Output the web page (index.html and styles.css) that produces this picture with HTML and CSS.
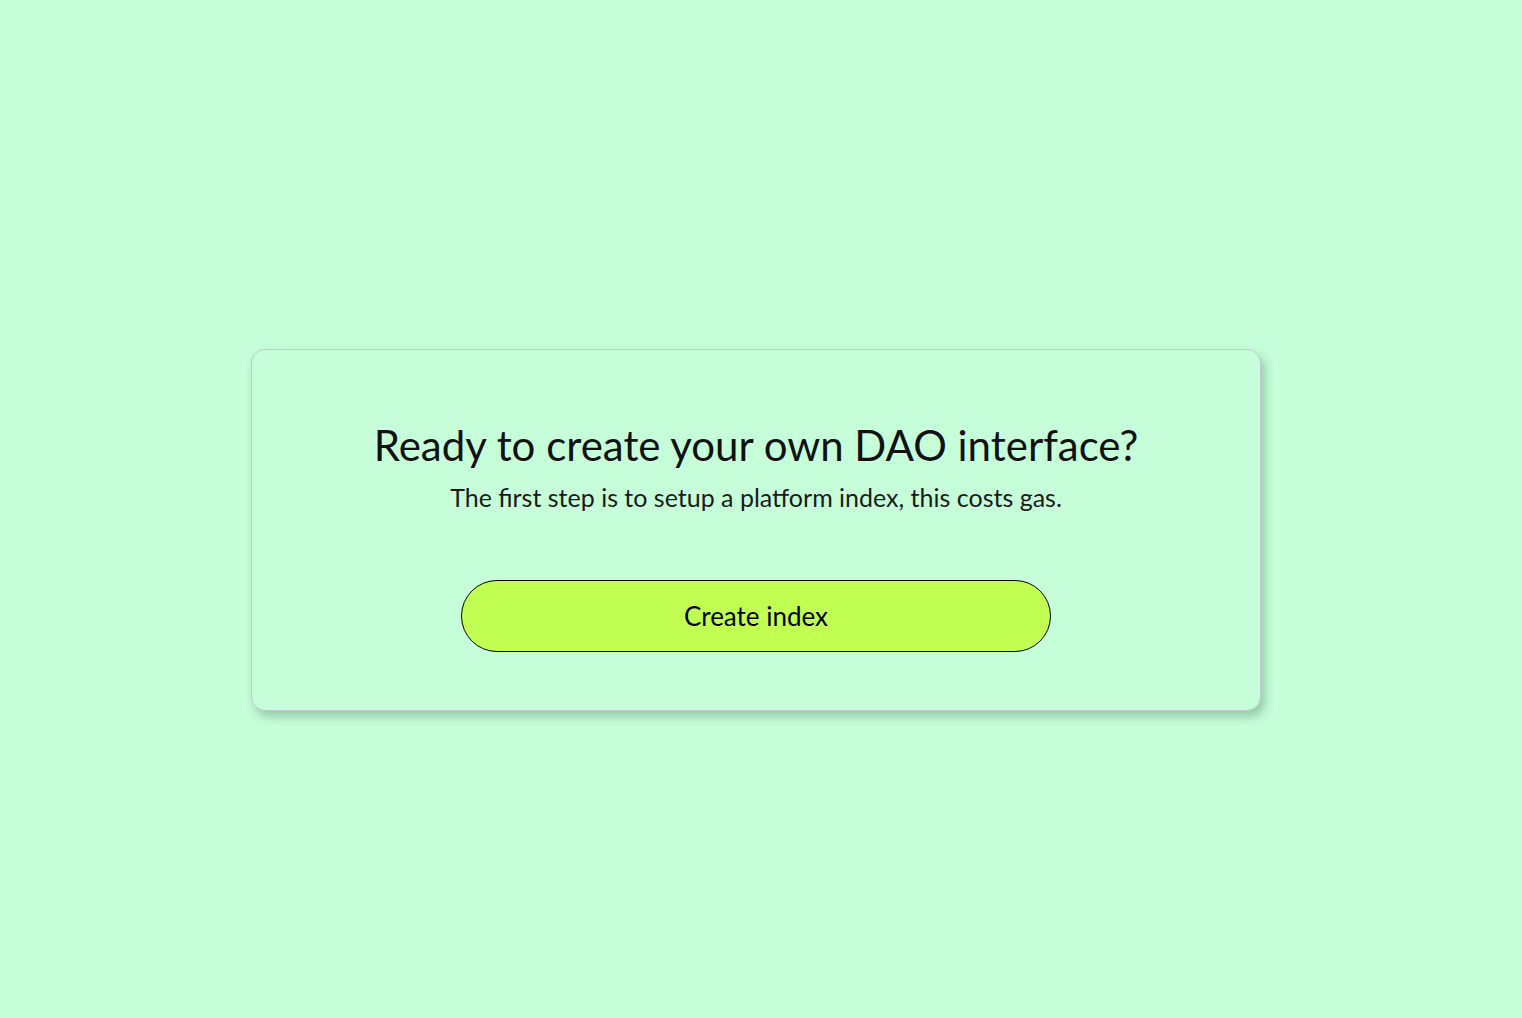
FILE: index.html
```html
<!DOCTYPE html>
<html lang="en">
<head>
<meta charset="utf-8">
<title>Create index</title>
<link rel="stylesheet" href="styles.css">
</head>
<body>
<main class="page">
  <section class="card">
    <h1 class="title">Ready to create your own DAO interface?</h1>
    <p class="subtitle">The first step is to setup a platform index, this costs gas.</p>
    <button class="cta" type="button">Create index</button>
  </section>
</main>
</body>
</html>
```
FILE: styles.css
```css
html, body {
  margin: 0;
  padding: 0;
  background: #c5fed9;
  font-family: "Lato", "Open Sans", sans-serif;
  color: #111;
}
.page {
  min-height: 1018px;
  box-sizing: border-box;
  padding: 349px 10px 0 0;
  display: flex;
  justify-content: center;
  align-items: flex-start;
}
.card {
  width: 1010px;
  height: 362px;
  box-sizing: border-box;
  background: #c5fed9;
  border: 1px solid #bfc8d4;
  border-radius: 14px;
  box-shadow: 4px 6px 10px rgba(60, 110, 80, 0.35);
  display: flex;
  flex-direction: column;
  align-items: center;
  padding-top: 70px;
}
.title {
  margin: 0;
  font-size: 42px;
  font-weight: 400;
  line-height: 50px;
  color: #111;
}
.subtitle {
  margin: 12px 0 0;
  font-size: 25px;
  line-height: 30px;
  font-weight: 400;
  color: #1a1a1a;
}
.cta {
  margin-top: 68px;
  width: 590px;
  height: 72px;
  border: 1px solid #000;
  border-radius: 36px;
  background: #c1ff52;
  font-family: inherit;
  font-size: 26px;
  color: #000;
  cursor: pointer;
}
```
